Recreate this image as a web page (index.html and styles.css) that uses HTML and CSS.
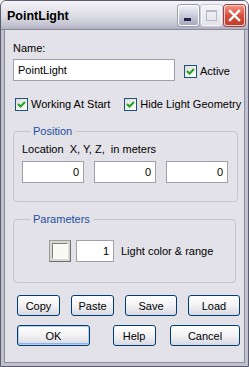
FILE: index.html
```html
<!DOCTYPE html>
<html lang="en">
<head>
    <meta charset="UTF-8">
    <title>PointLight</title>
    <link rel="stylesheet" href="styles.css">
</head>
<body>

<div id="window">
    <div id="titleBar">
        <span id="titleText">PointLight</span>
        <div id="titleButtons">
            <div class="capButton minBtn"><span class="minGlyph"></span></div>
            <div class="capButton maxBtn"><span class="maxGlyph"></span></div>
            <div class="capButton closeBtn">
                <svg width="13" height="13" viewBox="0 0 13 13"><path d="M2 2 L11 11 M11 2 L2 11" stroke="#fff" stroke-width="2.4" stroke-linecap="square"/></svg>
            </div>
        </div>
    </div>

    <div id="content">
        <div class="label">Name:</div>
        <div class="nameRow">
            <input type="text" class="textBox nameBox" value="PointLight">
            <label class="check activeCheck"><span class="box"><svg width="11" height="11" viewBox="0 0 11 11"><path d="M2 5 L4.5 7.5 L9 3" fill="none" stroke="#21a121" stroke-width="2"/></svg></span>Active</label>
        </div>

        <div class="checkRow">
            <label class="check"><span class="box"><svg width="11" height="11" viewBox="0 0 11 11"><path d="M2 5 L4.5 7.5 L9 3" fill="none" stroke="#21a121" stroke-width="2"/></svg></span>Working At Start</label>
            <label class="check"><span class="box"><svg width="11" height="11" viewBox="0 0 11 11"><path d="M2 5 L4.5 7.5 L9 3" fill="none" stroke="#21a121" stroke-width="2"/></svg></span>Hide Light Geometry</label>
        </div>

        <fieldset class="group positionGroup">
            <legend>Position</legend>
            <div class="label">Location&nbsp; X, Y, Z,&nbsp; in meters</div>
            <div class="xyzRow">
                <input type="text" class="textBox num" value="0">
                <input type="text" class="textBox num" value="0">
                <input type="text" class="textBox num" value="0">
            </div>
        </fieldset>

        <fieldset class="group paramGroup">
            <legend>Parameters</legend>
            <div class="paramRow">
                <div class="colorBtn"><span></span></div>
                <input type="text" class="textBox num rangeBox" value="1">
                <span class="paramText">Light color &amp; range</span>
            </div>
        </fieldset>

        <div class="buttonRow">
            <button class="btn small">Copy</button>
            <button class="btn small">Paste</button>
            <button class="btn wide">Save</button>
            <button class="btn wide">Load</button>
        </div>
        <div class="buttonRow">
            <button class="btn okBtn">OK</button>
            <button class="btn small helpBtn">Help</button>
            <button class="btn cancelBtn">Cancel</button>
        </div>
    </div>
</div>

</body>
</html>
```

FILE: styles.css
```css
body {
    margin: 0;
    background: #fff;
    font-family: "Liberation Sans", Arial, sans-serif;
    font-size: 11px;
    color: #000;
}
#window {
    width: 249px;
    height: 367px;
    box-sizing: border-box;
    border: 1px solid #5c5c6e;
    border-radius: 6px 6px 0 0;
    background: #c0c0ce;
    display: flex;
    flex-direction: column;
    overflow: hidden;
}
#titleBar {
    height: 28px;
    flex: none;
    display: flex;
    align-items: center;
    justify-content: space-between;
    padding: 0 3px 0 6px;
    background: linear-gradient(#f4f4f8 0%, #e8e8ee 25%, #dcdce4 55%, #c4c4d2 85%, #b0b0c0 100%);
    border-bottom: 1px solid #8a8a9c;
}
#titleText {
    font-weight: bold;
    font-size: 12.5px;
    color: #000;
    margin-top: 1px;
}
#titleButtons {
    display: flex;
    gap: 2px;
    margin-top: 1px;
}
.capButton {
    width: 21px;
    height: 21px;
    box-sizing: border-box;
    border-radius: 3px;
    display: flex;
    align-items: center;
    justify-content: center;
}
.minBtn {
    border: 1px solid #fff;
    background: linear-gradient(#f0f0f6, #c8c8da 55%, #a8a8c0);
    box-shadow: 0 0 0 1px #9c9cb0;
    align-items: flex-end;
}
.minGlyph {
    display: block;
    width: 7px;
    height: 3px;
    background: #232342;
    margin-bottom: 4px;
    margin-right: 3px;
}
.maxBtn {
    border: 1px solid #fafafc;
    background: linear-gradient(#f2f2f6, #e2e2ea);
    box-shadow: 0 0 0 1px #c8c8d4;
}
.maxGlyph {
    display: block;
    width: 9px;
    height: 8px;
    border: 1px solid #b8b8c8;
    border-top-width: 2px;
}
.closeBtn {
    border: 1px solid #f8d0c8;
    background: linear-gradient(#f09080, #d8503c 50%, #c03c2c);
    box-shadow: 0 0 0 1px #a04040;
}
#content {
    flex: 1;
    margin: 0 3px 3px 3px;
    background: #e3e2e8;
    padding: 12px 8px 0 8px;
    border-left: 1px solid #8c8c9c;
    border-right: 1px solid #8c8c9c;
    border-bottom: 1px solid #8c8c9c;
}
.label {
    line-height: 13px;
    white-space: nowrap;
}
.nameRow {
    display: flex;
    align-items: center;
    margin-top: 4px;
}
.textBox {
    box-sizing: border-box;
    height: 22px;
    border: 1px solid #a0a0ac;
    background: #fff;
    font-family: "Liberation Sans", Arial, sans-serif;
    font-size: 11px;
    padding: 0 4px;
    margin: 0;
    outline: none;
}
.nameBox {
    width: 162px;
}
.num {
    text-align: right;
}
.check {
    display: flex;
    align-items: center;
    line-height: 13px;
    white-space: nowrap;
    flex: none;
}
.box {
    width: 13px;
    height: 13px;
    flex: none;
    box-sizing: border-box;
    border: 1px solid #1c5180;
    background: linear-gradient(135deg, #dcdcd6, #fff);
    display: flex;
    align-items: center;
    justify-content: center;
    margin-right: 3px;
}
.activeCheck {
    margin-left: 9px;
    margin-top: 3px;
}
.checkRow {
    display: flex;
    gap: 14px;
    margin-top: 17px;
    padding-left: 2px;
}
.group {
    margin: 14px 0 0 0;
    border: 1px solid #c4c4cc;
    border-radius: 4px;
    padding: 5px 9px 18px 8px;
}
.group legend {
    color: #1e4f9e;
    padding: 0 3px;
    margin-left: 8px;
    line-height: 13px;
}
.xyzRow {
    display: flex;
    gap: 10px;
    margin-top: 5px;
}
.xyzRow .textBox {
    width: 62px;
}
.paramGroup {
    margin-top: 11px;
    padding-top: 14px;
    padding-bottom: 20px;
}
.paramRow {
    display: flex;
    align-items: center;
    padding-left: 27px;
}
.colorBtn {
    width: 22px;
    height: 22px;
    box-sizing: border-box;
    border: 1px solid #9c9c9c;
    border-right-color: #6c6c6c;
    border-bottom-color: #6c6c6c;
    background: #d8d8d0;
    padding: 2px;
}
.colorBtn span {
    display: block;
    width: 100%;
    height: 100%;
    box-sizing: border-box;
    border: 1px solid #808080;
    border-right-color: #fff;
    border-bottom-color: #fff;
    background: #fafaf4;
}
.rangeBox {
    width: 38px;
    margin-left: 5px;
}
.paramText {
    margin-left: 7px;
    white-space: nowrap;
}
.buttonRow {
    display: flex;
    justify-content: space-between;
    margin: 12px 0 0 4px;
    width: 223px;
}
.buttonRow + .buttonRow {
    margin-top: 9px;
}
.btn {
    height: 21px;
    box-sizing: border-box;
    border: 1px solid #003c74;
    border-radius: 3px;
    background: linear-gradient(#ffffff, #f2f2f4 50%, #d8d8e2);
    font-family: "Liberation Sans", Arial, sans-serif;
    font-size: 11px;
    color: #000;
    padding: 0;
}
.small {
    width: 43px;
}
.wide {
    width: 52px;
}
.okBtn {
    width: 73px;
    box-shadow: inset 0 0 0 1px #b8d0f0, inset 0 -1px 0 1px #8cb4ea;
}
.helpBtn {
    margin-left: 8px;
}
.cancelBtn {
    width: 70px;
}
```
